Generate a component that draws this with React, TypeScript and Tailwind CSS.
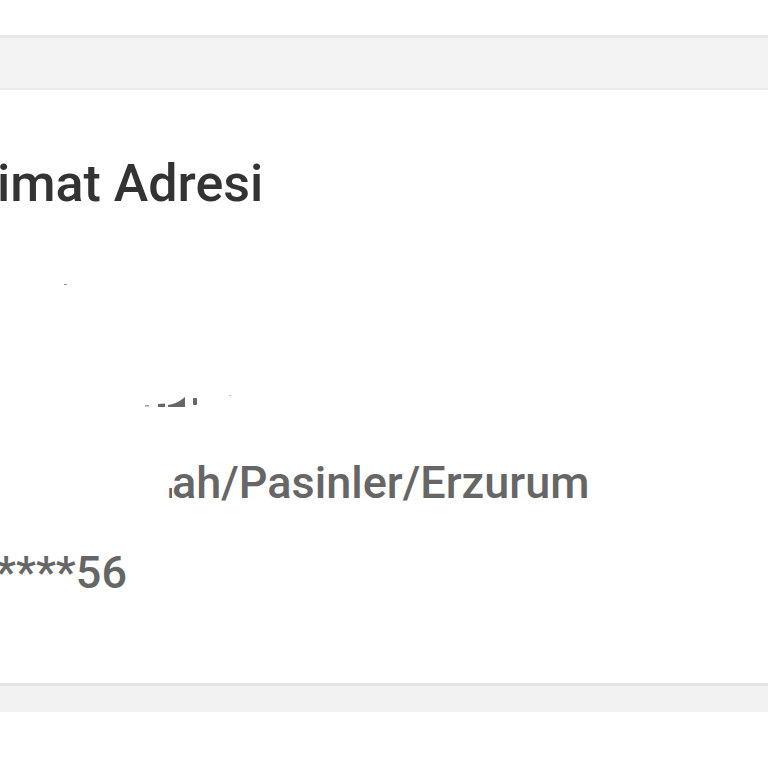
export default function App() {
  return (
    <div className="w-[768px] h-[768px] overflow-hidden bg-white font-['Roboto',sans-serif]">
      {/* top white strip */}
      <div className="h-[35px] bg-white" />
      {/* gray band */}
      <div className="h-[55px] bg-[#f3f3f3] border-t-[3px] border-t-[#e7e7e7] border-b-2 border-b-[#ebebeb]" />

      {/* address card */}
      <div className="bg-white pt-[54px] pb-[65px]">
        <h2 className="h-[80px] leading-[80px] text-[52px] font-medium text-[#333333] -ml-[3px] whitespace-nowrap">
          imat Adresi
        </h2>
        <div className="h-[34px]" />

        {/* redacted line */}
        <div className="h-[90px] pl-[64px] pt-[26px]">
          <div className="w-[3px] h-[1px] bg-[#9a9a9a]" />
        </div>

        {/* redacted line with leftover fragments */}
        <div className="h-[90px] pl-[143px] pt-[45px]">
          <svg width="100" height="16" viewBox="0 0 100 16" fill="#666666">
            <rect x="2" y="12" width="4" height="1.5" fill="#9a9a9a" />
            <path d="M15 11 L22 10.5 L22 14 L15 14 Z" />
            <path d="M25 12 C30 11 34 10 38 7 L42 4 L42 14 L25 14 Z" />
            <rect x="50" y="5" width="4" height="7" rx="1" />
            <rect x="86" y="2" width="2" height="1" fill="#c8c8c8" />
          </svg>
        </div>

        {/* district / city */}
        <div className="h-[90px] pl-[166px] flex items-start">
          <span className="w-[6px] h-[90px] overflow-hidden flex justify-end items-end">
            <span className="block h-[40px] overflow-hidden">
              <span className="block -mt-[50px] leading-[90px] text-[45px] font-medium text-[#666666]">M</span>
            </span>
          </span>
          <span className="leading-[90px] text-[45px] font-medium text-[#666666] whitespace-nowrap">
            ah/Pasinler/Erzurum
          </span>
        </div>

        {/* phone */}
        <div className="h-[90px] -ml-[4px] leading-[90px] text-[45px] font-medium text-[#666666] whitespace-nowrap">
          ****56
        </div>
      </div>

      {/* bottom gray band */}
      <div className="h-[29px] bg-[#f2f2f2] border-t-[3px] border-t-[#e4e4e4]" />
      <div className="h-[56px] bg-white" />
    </div>
  )
}
